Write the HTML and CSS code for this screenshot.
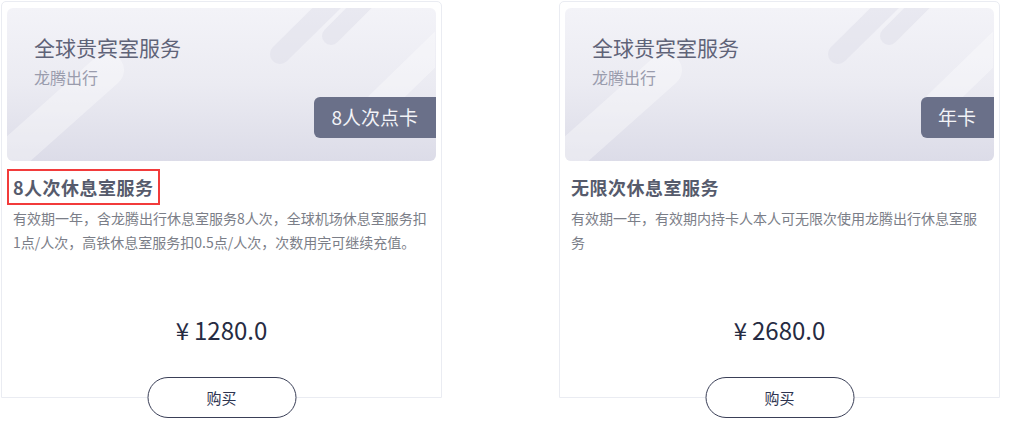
FILE: index.html
```html
<!DOCTYPE html>
<html lang="zh-CN">
<head>
  <meta charset="UTF-8">
  <meta name="viewport" content="width=device-width, initial-scale=1.0">
  <title>全球贵宾室服务</title>
  <link rel="stylesheet" href="styles.css">
</head>
<body>
  <div class="card-list">
    <!-- 8人次点卡 -->
    <div class="card">
      <div class="banner">
        <svg class="banner-deco" width="428" height="153" viewBox="0 0 428 153">
          <line x1="-10" y1="160" x2="100" y2="62" stroke="#ffffff" stroke-opacity="0.35" stroke-width="34" stroke-linecap="round" />
          <line x1="273" y1="46" x2="340" y2="-20" stroke="#d9d9e6" stroke-opacity="0.4" stroke-width="20" stroke-linecap="round" />
          <line x1="324" y1="28" x2="372" y2="-20" stroke="#d9d9e6" stroke-opacity="0.4" stroke-width="18" stroke-linecap="round" />
          <line x1="372" y1="96" x2="440" y2="30" stroke="#ffffff" stroke-opacity="0.35" stroke-width="26" stroke-linecap="round" />
        </svg>
        <div class="banner-title">全球贵宾室服务</div>
        <div class="banner-sub">龙腾出行</div>
        <div class="badge">8人次点卡</div>
      </div>
      <div class="info">
        <div class="info-title selected">8人次休息室服务</div>
        <div class="info-desc">有效期一年，含龙腾出行休息室服务8人次，全球机场休息室服务扣1点/人次，高铁休息室服务扣0.5点/人次，次数用完可继续充值。</div>
      </div>
      <div class="price"><span class="yen">¥</span>1280.0</div>
      <button class="buy-btn">购买</button>
    </div>

    <!-- 年卡 -->
    <div class="card">
      <div class="banner">
        <svg class="banner-deco" width="428" height="153" viewBox="0 0 428 153">
          <line x1="-10" y1="160" x2="100" y2="62" stroke="#ffffff" stroke-opacity="0.35" stroke-width="34" stroke-linecap="round" />
          <line x1="273" y1="46" x2="340" y2="-20" stroke="#d9d9e6" stroke-opacity="0.4" stroke-width="20" stroke-linecap="round" />
          <line x1="324" y1="28" x2="372" y2="-20" stroke="#d9d9e6" stroke-opacity="0.4" stroke-width="18" stroke-linecap="round" />
          <line x1="372" y1="96" x2="440" y2="30" stroke="#ffffff" stroke-opacity="0.35" stroke-width="26" stroke-linecap="round" />
        </svg>
        <div class="banner-title">全球贵宾室服务</div>
        <div class="banner-sub">龙腾出行</div>
        <div class="badge">年卡</div>
      </div>
      <div class="info">
        <div class="info-title">无限次休息室服务</div>
        <div class="info-desc">有效期一年，有效期内持卡人本人可无限次使用龙腾出行休息室服务</div>
      </div>
      <div class="price"><span class="yen">¥</span>2680.0</div>
      <button class="buy-btn">购买</button>
    </div>
  </div>
</body>
</html>
```

FILE: styles.css
```css
html,
body {
  margin: 0;
  padding: 0;
  min-height: 432px;
  background-color: #ffffff;
  font-family: "Noto Sans CJK SC", "Noto Sans", sans-serif;
}

.card-list {
  display: flex;
  gap: 117px;
  padding: 1px 0 34px 1px;
}

.card {
  position: relative;
  width: 441px;
  height: 397px;
  box-sizing: border-box;
  border: 1px solid #eaecf2;
  border-radius: 5px 5px 0 0;
  padding: 6px 5px 0 5px;
  display: flex;
  flex-direction: column;
}

.banner {
  position: relative;
  height: 153px;
  box-sizing: border-box;
  border-radius: 6px;
  overflow: hidden;
  padding: 25px 0 0 27px;
  display: flex;
  flex-direction: column;
  background: linear-gradient(180deg, #f3f3f8 0%, #ebebf2 50%, #dcdce8 100%);
}

.banner-deco {
  position: absolute;
  left: 0;
  top: 0;
}

.banner-title {
  position: relative;
  font-size: 21px;
  line-height: 28px;
  color: #5f6378;
}

.banner-sub {
  position: relative;
  margin-top: 5px;
  font-size: 16px;
  line-height: 22px;
  color: #9a9cad;
}

.badge {
  position: relative;
  align-self: flex-end;
  margin-top: 9px;
  height: 41px;
  line-height: 40px;
  padding: 0 18px 0 17px;
  font-size: 19px;
  color: #f2f3f7;
  background-color: #6a7089;
  border-radius: 6px 0 0 6px;
}

.info {
  padding: 0 5px 0 6px;
}

.info-title {
  display: inline-block;
  margin-top: 14px;
  font-size: 18px;
  font-weight: bold;
  line-height: 24px;
  letter-spacing: 0.5px;
  color: #565b6c;
}

.info-title.selected {
  outline: 2px solid #f23b3b;
  outline-offset: 4px;
}

.info-desc {
  margin-top: 6px;
  font-size: 14px;
  line-height: 24px;
  color: #7b7e88;
}

.price {
  margin-top: auto;
  margin-bottom: 51px;
  text-align: center;
  font-size: 24px;
  line-height: 32px;
  color: #262b42;
}

.yen {
  margin-right: 5px;
}

.buy-btn {
  position: absolute;
  left: 50%;
  bottom: -21px;
  transform: translateX(-50%);
  width: 149px;
  height: 41px;
  padding: 0;
  border: 1px solid #3a3f57;
  border-radius: 21px;
  background-color: #ffffff;
  font-family: "Noto Sans CJK SC", sans-serif;
  font-size: 15px;
  color: #2e3450;
  cursor: pointer;
}
```
